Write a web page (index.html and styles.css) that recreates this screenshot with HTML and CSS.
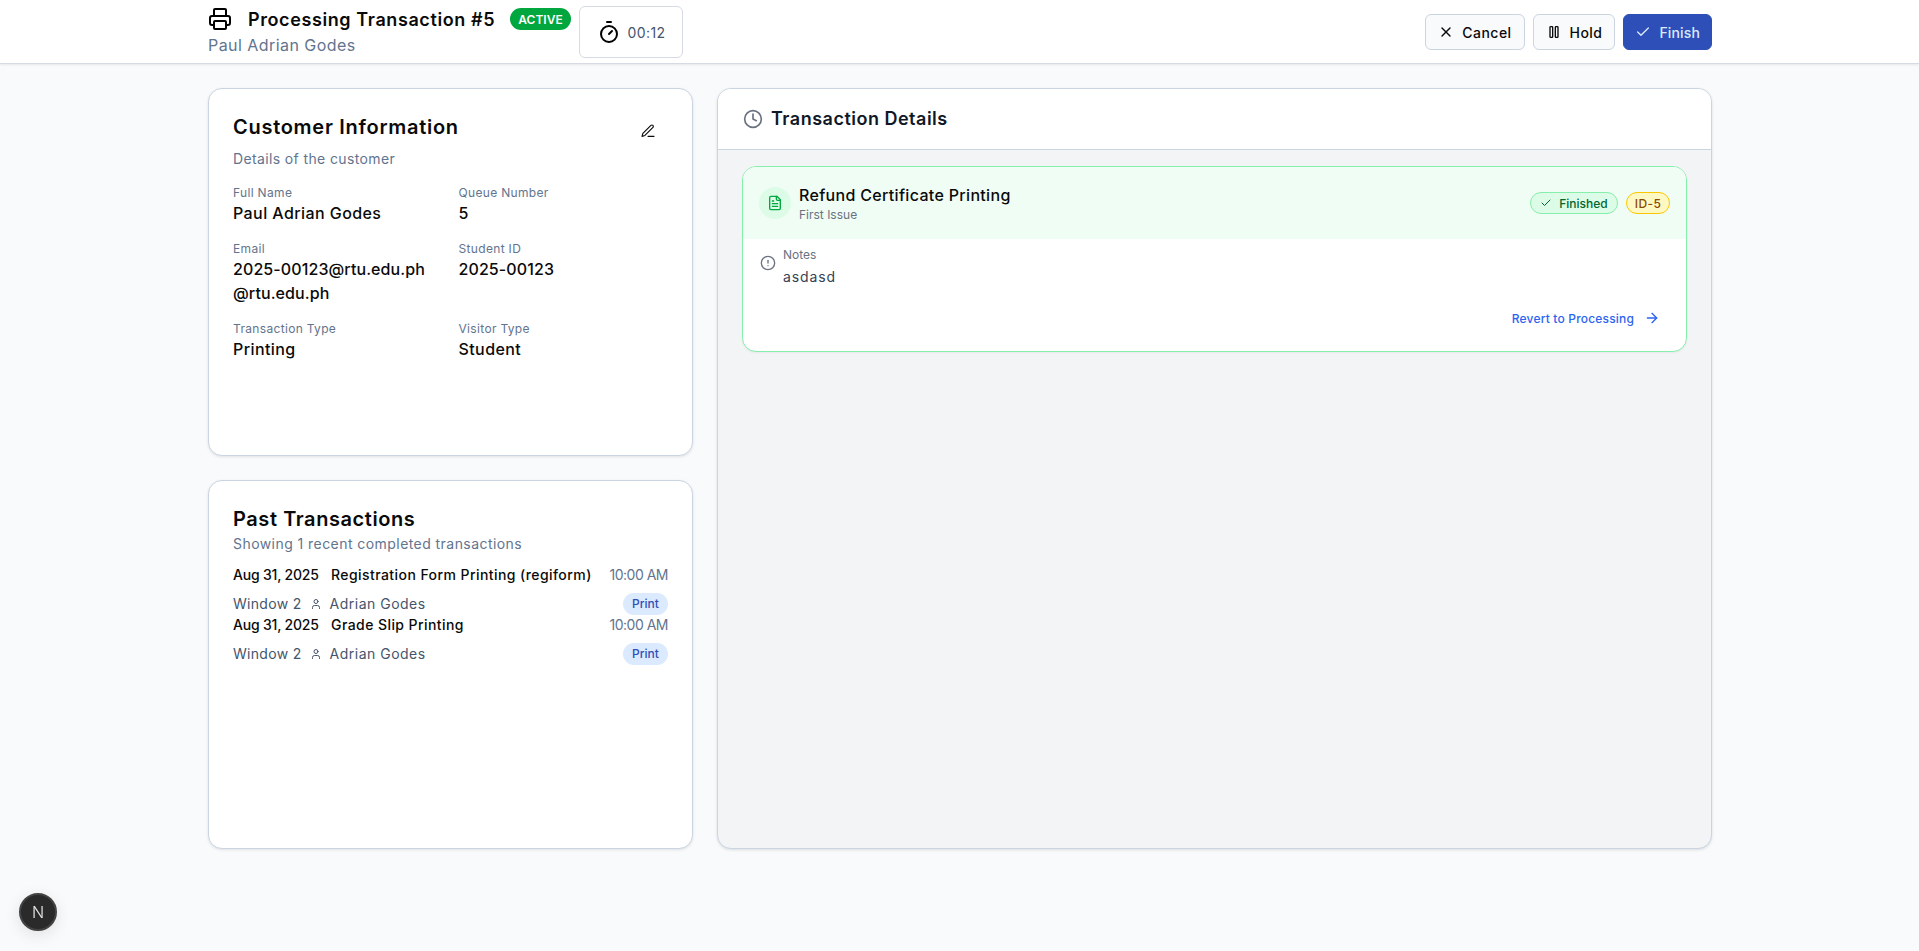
FILE: index.html
```html
<!DOCTYPE html>
<html lang="en">
<head>
    <meta charset="UTF-8">
    <meta name="viewport" content="width=device-width, initial-scale=1.0">
    <title>Processing Transaction #5</title>
    <link rel="stylesheet" href="styles.css">
</head>
<body>
    <header class="topbar">
        <div class="topbar_inner">
            <div class="topbar_left">
                <div class="heading">
                    <div class="heading_row">
                        <svg class="icon_printer" viewBox="0 0 24 24"><path d="M6 9V3a1 1 0 0 1 1-1h10a1 1 0 0 1 1 1v6"/><path d="M6 18H4a2 2 0 0 1-2-2v-5a2 2 0 0 1 2-2h16a2 2 0 0 1 2 2v5a2 2 0 0 1-2 2h-2"/><rect x="6" y="14" width="12" height="8" rx="1"/></svg>
                        <h1>Processing Transaction #5</h1>
                        <span class="badge_active">ACTIVE</span>
                    </div>
                    <p class="heading_name">Paul Adrian Godes</p>
                </div>
                <div class="timer">
                    <svg class="icon_timer" viewBox="0 0 24 24"><line x1="10" y1="2" x2="14" y2="2"/><line x1="12" y1="14" x2="15" y2="11"/><circle cx="12" cy="14" r="8"/></svg>
                    <span>00:12</span>
                </div>
            </div>
            <div class="actions">
                <button class="btn">
                    <svg viewBox="0 0 24 24"><path d="M18 6 6 18"/><path d="m6 6 12 12"/></svg>
                    Cancel
                </button>
                <button class="btn">
                    <svg viewBox="0 0 24 24"><rect x="6" y="4" width="4" height="16" rx="1"/><rect x="14" y="4" width="4" height="16" rx="1"/></svg>
                    Hold
                </button>
                <button class="btn btn_finish">
                    <svg viewBox="0 0 24 24"><path d="M20 6 9 17l-5-5"/></svg>
                    Finish
                </button>
            </div>
        </div>
    </header>

    <main class="page">
        <div class="left_col">
            <section class="card">
                <div class="card_top">
                    <h2 class="title_customer">Customer Information</h2>
                    <svg class="icon_edit" viewBox="0 0 24 24"><path d="M12 20h9"/><path d="M16.4 3.6a2.1 2.1 0 1 1 3 3L7.4 18.7 3 20l1.300-4.400z"/></svg>
                </div>
                <p class="card_sub">Details of the customer</p>
                <div class="info_grid">
                    <div>
                        <p class="info_label">Full Name</p>
                        <p class="info_value">Paul Adrian Godes</p>
                    </div>
                    <div>
                        <p class="info_label">Queue Number</p>
                        <p class="info_value">5</p>
                    </div>
                    <div>
                        <p class="info_label">Email</p>
                        <p class="info_value value_tight">2025-00123@rtu.edu.ph<br>@rtu.edu.ph</p>
                    </div>
                    <div>
                        <p class="info_label">Student ID</p>
                        <p class="info_value value_tight">2025-00123</p>
                    </div>
                    <div>
                        <p class="info_label">Transaction Type</p>
                        <p class="info_value">Printing</p>
                    </div>
                    <div>
                        <p class="info_label">Visitor Type</p>
                        <p class="info_value">Student</p>
                    </div>
                </div>
            </section>

            <section class="card">
                <h2 class="title_past">Past Transactions</h2>
                <p class="past_sub">Showing 1 recent completed transactions</p>
                <div class="past_list">
                    <div class="past_item">
                        <div class="past_row">
                            <span class="past_date">Aug 31, 2025</span>
                            <span class="past_title">Registration Form Printing (regiform)</span>
                            <span class="past_time">10:00 AM</span>
                        </div>
                        <div class="past_row past_row2">
                            <span class="past_window">Window 2</span>
                            <svg class="icon_user" viewBox="0 0 24 24"><path d="M19 21v-2a4 4 0 0 0-4-4H9a4 4 0 0 0-4 4v2"/><circle cx="12" cy="7" r="4"/></svg>
                            <span class="past_staff">Adrian Godes</span>
                            <span class="pill_print">Print</span>
                        </div>
                    </div>
                    <div class="past_item">
                        <div class="past_row">
                            <span class="past_date">Aug 31, 2025</span>
                            <span class="past_title">Grade Slip Printing</span>
                            <span class="past_time">10:00 AM</span>
                        </div>
                        <div class="past_row past_row2">
                            <span class="past_window">Window 2</span>
                            <svg class="icon_user" viewBox="0 0 24 24"><path d="M19 21v-2a4 4 0 0 0-4-4H9a4 4 0 0 0-4 4v2"/><circle cx="12" cy="7" r="4"/></svg>
                            <span class="past_staff">Adrian Godes</span>
                            <span class="pill_print">Print</span>
                        </div>
                    </div>
                </div>
            </section>
        </div>

        <section class="details">
            <div class="details_head">
                <svg class="icon_clock" viewBox="0 0 24 24"><circle cx="12" cy="12" r="10"/><path d="M12 6v6l4 2"/></svg>
                <h2>Transaction Details</h2>
            </div>
            <div class="details_body">
                <article class="item">
                    <div class="item_head">
                        <div class="item_icon">
                            <svg viewBox="0 0 24 24"><path d="M15 2H6a2 2 0 0 0-2 2v16a2 2 0 0 0 2 2h12a2 2 0 0 0 2-2V7z"/><path d="M14 2v4a2 2 0 0 0 2 2h4"/><path d="M8 13h8"/><path d="M8 17h8"/><path d="M8 9h2"/></svg>
                        </div>
                        <div class="item_text">
                            <p class="item_title">Refund Certificate Printing</p>
                            <p class="item_sub">First Issue</p>
                        </div>
                        <span class="pill_finished">
                            <svg viewBox="0 0 24 24"><path d="M20 6 9 17l-5-5"/></svg>
                            Finished
                        </span>
                        <span class="pill_id">ID-5</span>
                    </div>
                    <div class="item_body">
                        <div class="notes">
                            <svg class="icon_alert" viewBox="0 0 24 24"><circle cx="12" cy="12" r="10"/><line x1="12" y1="8" x2="12" y2="12"/><line x1="12" y1="16" x2="12.010" y2="16"/></svg>
                            <div>
                                <p class="notes_label">Notes</p>
                                <p class="notes_text">asdasd</p>
                            </div>
                        </div>
                        <a class="revert" href="#">
                            Revert to Processing
                            <svg viewBox="0 0 24 24"><path d="M5 12h14"/><path d="m12 5 7 7-7 7"/></svg>
                        </a>
                    </div>
                </article>
            </div>
        </section>
    </main>

    <div class="dev_badge">N</div>
</body>
</html>
```

FILE: styles.css
```css
* {
    box-sizing: border-box;
}
body {
    margin: 0;
    background: #f8fafc;
    color: #0a0a0a;
    font-family: "Inter", "Liberation Sans", sans-serif;
    min-height: 951px;
}
h1, h2, p {
    margin: 0;
}
svg {
    fill: none;
    stroke: currentColor;
    stroke-width: 2;
    stroke-linecap: round;
    stroke-linejoin: round;
    flex-shrink: 0;
}

/* top bar */
.topbar {
    height: 64px;
    background: #fff;
    border-bottom: 1px solid #d5dae3;
    box-shadow: 0 1px 2px rgba(0, 0, 0, 0.08);
}
.topbar_inner {
    width: 1504px;
    margin: 0 0 0 208px;
    height: 63px;
    display: flex;
    justify-content: space-between;
    align-items: flex-start;
}
.topbar_left {
    display: flex;
    gap: 8px;
    padding-top: 6px;
}
.heading_row {
    display: flex;
    align-items: center;
    height: 26px;
}
.icon_printer {
    width: 24px;
    height: 24px;
    margin-right: 16px;
    color: #000;
}
h1 {
    font-size: 18px;
    font-weight: 600;
    letter-spacing: 0.6px;
    margin-right: 16px;
    width: 246px;
    white-space: nowrap;
}
.badge_active {
    background: #00a63e;
    color: #fff;
    font-size: 12px;
    font-weight: 600;
    border-radius: 11px;
    height: 22px;
    width: 61px;
    display: flex;
    align-items: center;
    justify-content: center;
}
.heading_name {
    font-size: 16px;
    line-height: 24px;
    color: #62748e;
    letter-spacing: 0.45px;
    margin-top: 1px;
}
.timer {
    width: 104px;
    height: 52px;
    background: #fff;
    border: 1px solid #d5dae3;
    border-radius: 6px;
    display: flex;
    align-items: center;
    justify-content: center;
    gap: 7px;
    font-size: 14px;
    letter-spacing: 0.4px;
    color: #45556c;
}
.icon_timer {
    width: 24px;
    height: 24px;
    color: #000;
}
.actions {
    display: flex;
    gap: 8px;
    padding-top: 14px;
}
.btn {
    height: 36px;
    padding: 0 12px;
    display: flex;
    align-items: center;
    gap: 8px;
    background: #f8fafc;
    border: 1px solid #cbd5e1;
    border-radius: 6px;
    font-family: inherit;
    font-size: 14px;
    font-weight: 500;
    letter-spacing: 0.45px;
    color: #0a0a0a;
}
.btn svg {
    width: 16px;
    height: 16px;
}
.btn_finish {
    padding: 0 11px;
    letter-spacing: 0.15px;
    background: #2f4fb8;
    border-color: #2f4fb8;
    color: #dbeafe;
}

/* columns */
.page {
    width: 1504px;
    margin-left: 208px;
    padding-top: 24px;
    display: grid;
    grid-template-columns: 485px 1fr;
    gap: 24px;
    height: 785px;
}
.left_col {
    display: grid;
    grid-template-rows: 368px 369px;
    gap: 24px;
}
.card {
    background: #fff;
    border: 1px solid #cbd5e1;
    border-radius: 14px;
    padding: 24px;
    box-shadow: 0 1px 3px rgba(0, 0, 0, 0.1);
}
.card_top {
    display: flex;
    justify-content: space-between;
    align-items: flex-start;
}
h2 {
    font-size: 20px;
    line-height: 28px;
    font-weight: 600;
}
.title_customer {
    letter-spacing: 0.72px;
}
.title_past {
    letter-spacing: 0.57px;
}
.icon_edit {
    width: 16px;
    height: 16px;
    margin: 10px 12px 0 0;
    stroke-width: 1.7;
}
.card_sub {
    font-size: 14px;
    line-height: 20px;
    letter-spacing: 0.37px;
    color: #62748e;
    margin-top: 8px;
}

/* customer info */
.info_grid {
    display: grid;
    grid-template-columns: 1fr 1fr;
    gap: 16px;
    margin-top: 16px;
}
.info_label {
    font-size: 12px;
    line-height: 16px;
    letter-spacing: 0.33px;
    color: #62748e;
}
.info_value {
    font-size: 16px;
    line-height: 24px;
    font-weight: 500;
    letter-spacing: 0.42px;
}
.value_tight {
    letter-spacing: 0.1px;
}

/* past transactions */
.past_sub {
    font-size: 14px;
    line-height: 20px;
    letter-spacing: 0.44px;
    color: #62748e;
    margin-top: 1px;
}
.past_list {
    margin-top: 11px;
}
.past_row {
    display: flex;
    align-items: center;
    font-size: 14px;
    line-height: 20px;
}
.past_date {
    width: 98px;
    font-weight: 500;
    letter-spacing: -0.2px;
}
.past_title {
    font-weight: 500;
    letter-spacing: 0.43px;
    flex: 1;
}
.past_time {
    letter-spacing: -0.5px;
    color: #62748e;
}
.past_row2 {
    margin-top: 8px;
    color: #45556c;
}
.past_window {
    letter-spacing: 0.3px;
}
.icon_user {
    width: 12px;
    height: 12px;
    margin: 0 8px;
}
.past_staff {
    letter-spacing: 0.5px;
    flex: 1;
}
.pill_print {
    width: 45px;
    height: 22px;
    border-radius: 11px;
    background: #dbeafe;
    color: #2f4fb8;
    font-size: 12px;
    font-weight: 500;
    display: flex;
    align-items: center;
    justify-content: center;
}

/* transaction details */
.details {
    border: 1px solid #cbd5e1;
    border-radius: 14px;
    background: #f3f4f6;
    box-shadow: 0 1px 3px rgba(0, 0, 0, 0.12);
    overflow: hidden;
}
.details_head {
    height: 61px;
    background: #fff;
    border-bottom: 1px solid #cbd5e1;
    display: flex;
    align-items: center;
    gap: 8px;
    padding-left: 25px;
}
.details_head h2 {
    font-size: 18px;
    letter-spacing: 0.5px;
    color: #101828;
}
.icon_clock {
    width: 20px;
    height: 20px;
    color: #6a7282;
}
.details_body {
    padding: 16px 24px;
}
.item {
    border: 1px solid #86efac;
    border-radius: 14px;
    background: #fff;
    overflow: hidden;
    height: 186px;
    box-shadow: 0 1px 2px rgba(0, 0, 0, 0.05);
}
.item_head {
    height: 72px;
    background: #f0fdf4;
    display: flex;
    align-items: center;
    padding: 0 16px;
}
.item_icon {
    width: 32px;
    height: 32px;
    border-radius: 50%;
    background: #dcfce7;
    color: #00a63e;
    display: flex;
    align-items: center;
    justify-content: center;
    margin-right: 8px;
}
.item_icon svg {
    width: 16px;
    height: 16px;
}
.item_text {
    flex: 1;
}
.item_title {
    font-size: 16px;
    line-height: 24px;
    font-weight: 500;
    letter-spacing: 0.32px;
}
.item_sub {
    font-size: 12px;
    line-height: 16px;
    color: #6a7282;
}
.pill_finished, .pill_id {
    height: 22px;
    border-radius: 11px;
    font-size: 12px;
    font-weight: 500;
    display: flex;
    align-items: center;
    justify-content: center;
}
.pill_finished {
    width: 88px;
    gap: 7px;
    background: #dcfce7;
    border: 1px solid #86efac;
    color: #016630;
    margin-right: 8px;
}
.pill_finished svg {
    width: 12px;
    height: 12px;
}
.pill_id {
    width: 44px;
    letter-spacing: 0.4px;
    background: #fef9c2;
    border: 1px solid #fdc700;
    color: #894b00;
}
.item_body {
    padding: 8px 26px 0 17px;
}
.notes {
    display: flex;
    gap: 7px;
}
.icon_alert {
    width: 16px;
    height: 16px;
    margin-top: 8px;
    color: #6a7282;
}
.notes_label {
    font-size: 12px;
    line-height: 16px;
    color: #6a7282;
}
.notes_text {
    font-size: 14px;
    line-height: 20px;
    letter-spacing: 0.9px;
    margin-top: 4px;
    color: #364153;
}
.revert {
    display: flex;
    justify-content: flex-end;
    align-items: center;
    gap: 10px;
    margin-top: 23px;
    font-size: 12px;
    font-weight: 500;
    letter-spacing: 0.18px;
    color: #2b63f0;
    text-decoration: none;
}
.revert svg {
    width: 16px;
    height: 16px;
}

/* floating dev badge */
.dev_badge {
    position: fixed;
    left: 19px;
    bottom: 20px;
    width: 38px;
    height: 38px;
    border-radius: 50%;
    background: #2a2a2a;
    border: 2px solid #444;
    box-shadow: 0 4px 16px rgba(0, 0, 0, 0.1);
    color: #e8e8e8;
    font-size: 16px;
    font-weight: 300;
    display: flex;
    align-items: center;
    justify-content: center;
}
```
